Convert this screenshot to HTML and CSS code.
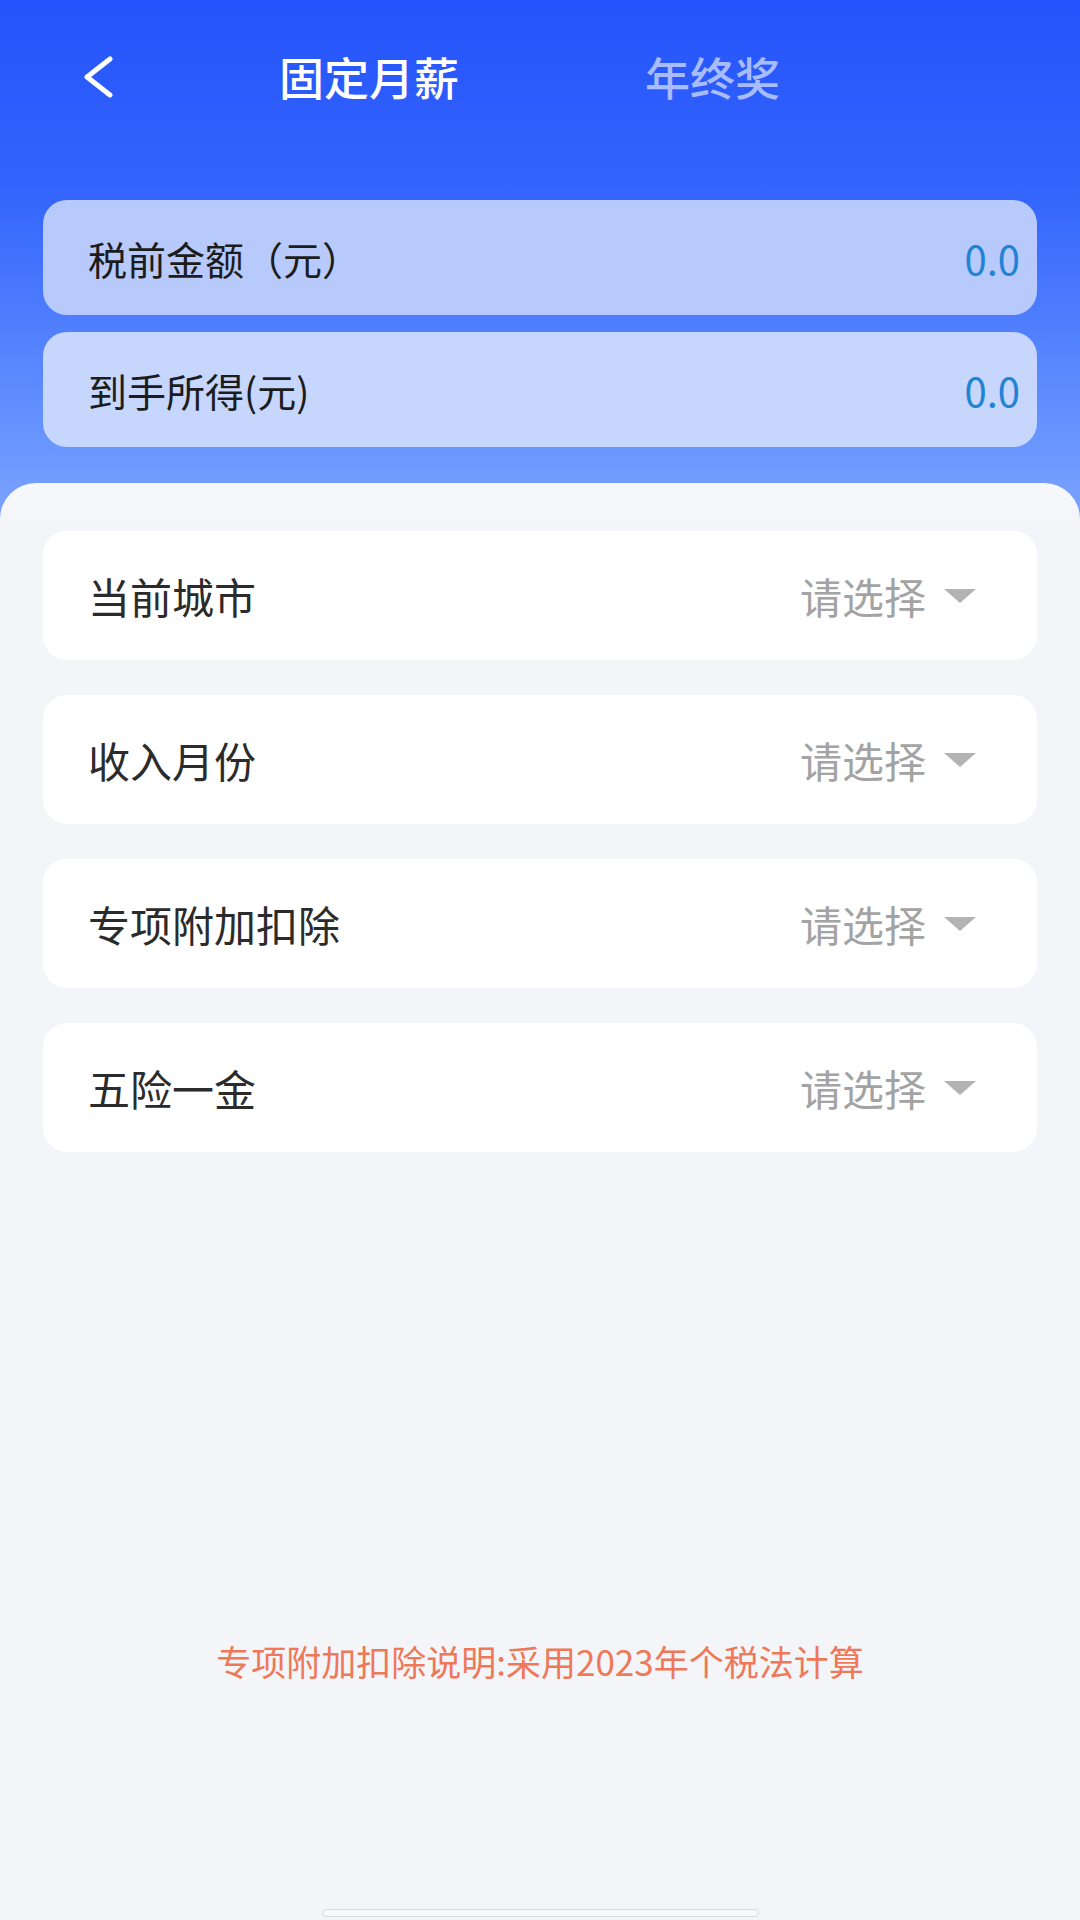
FILE: index.html
```html
<!DOCTYPE html>
<html lang="zh-CN">
<head>
    <meta charset="UTF-8">
    <meta name="viewport" content="width=device-width, initial-scale=1.0">
    <title>个税计算</title>
    <link rel="stylesheet" href="styles.css">
</head>
<body>
    <div class="page">
        <header class="nav">
            <svg class="back" width="30" height="42" viewBox="0 0 30 42">
                <path d="M27 3 L4 21 L27 39" fill="none" stroke="#fff" stroke-width="5" stroke-linecap="round" stroke-linejoin="round"/>
            </svg>
            <span class="tab active">固定月薪</span>
            <span class="tab">年终奖</span>
        </header>

        <section class="summary">
            <div class="sum-card top">
                <span class="sum-label">税前金额（元）</span>
                <span class="sum-value">0.0</span>
            </div>
            <div class="sum-card bottom">
                <span class="sum-label">到手所得(元)</span>
                <span class="sum-value">0.0</span>
            </div>
        </section>

        <main class="sheet">
            <div class="option">
                <span class="option-label">当前城市</span>
                <span class="option-pick">请选择<i class="caret"></i></span>
            </div>
            <div class="option">
                <span class="option-label">收入月份</span>
                <span class="option-pick">请选择<i class="caret"></i></span>
            </div>
            <div class="option">
                <span class="option-label">专项附加扣除</span>
                <span class="option-pick">请选择<i class="caret"></i></span>
            </div>
            <div class="option">
                <span class="option-label">五险一金</span>
                <span class="option-pick">请选择<i class="caret"></i></span>
            </div>

            <p class="note">专项附加扣除说明:采用2023年个税法计算</p>

            <div class="home-bar"></div>
        </main>
    </div>
</body>
</html>
```

FILE: styles.css
```css
body {
    margin: 0;
    font-family: "Noto Sans CJK SC", "Noto Sans", sans-serif;
    background: #f3f5f9;
    color: #222;
}

.page {
    width: 1080px;
    min-height: 1920px;
    display: flex;
    flex-direction: column;
    background: linear-gradient(180deg, #2553fb 0%, #3465fc 35%, #5e8cfe 70%, #85abff 100%) top / 100% 560px no-repeat, #f3f5f9;
}

/* 顶部导航 */
.nav {
    display: flex;
    align-items: center;
    height: 54px;
    padding: 50px 0 0 83px;
}

.back {
    display: block;
    margin-right: 166px;
}

.tab {
    font-size: 45px;
    font-weight: 500;
    line-height: 54px;
    color: rgba(255, 255, 255, 0.6);
}

.tab.active {
    color: #fff;
    margin-right: 186px;
}

/* 金额卡片 */
.summary {
    display: flex;
    flex-direction: column;
    gap: 17px;
    margin: 96px 43px 0;
}

.sum-card {
    display: flex;
    align-items: center;
    justify-content: space-between;
    height: 115px;
    padding: 0 17px 0 45px;
    border-radius: 24px;
}

.sum-card.top {
    background: #b8cafb;
}

.sum-card.bottom {
    background: #c6d6fc;
}

.sum-label {
    font-size: 39px;
    color: #1c1c1c;
}

.sum-label.wide {
    letter-spacing: 1px;
}

.sum-value {
    font-size: 40px;
    color: #1f84d6;
}

/* 选项列表 */
.sheet {
    flex: 1;
    display: flex;
    flex-direction: column;
    gap: 35px;
    margin-top: 36px;
    padding: 48px 43px 0;
    background: linear-gradient(180deg, #f6f8fb 0, #f3f5f9 40px);
    border-radius: 36px 36px 0 0;
}

.option {
    display: flex;
    align-items: center;
    justify-content: space-between;
    height: 129px;
    padding: 0 61px 0 45px;
    background: #fff;
    border-radius: 24px;
}

.option-label {
    font-size: 42px;
    color: #2b2b2b;
}

.option-pick {
    display: flex;
    align-items: center;
    font-size: 42px;
    color: #a3a3a3;
}

.caret {
    width: 0;
    height: 0;
    margin-left: 18px;
    border-left: 16px solid transparent;
    border-right: 16px solid transparent;
    border-top: 14px solid #b3b3b3;
}

.note {
    margin: 449px 0 0;
    text-align: center;
    font-size: 35px;
    line-height: 50px;
    color: #ef7858;
}

.home-bar {
    align-self: center;
    width: 435px;
    height: 6px;
    margin-top: auto;
    margin-bottom: 3px;
    background: #f7f8fb;
    border: 1px solid #d9dbe0;
    border-radius: 4px;
}
```
